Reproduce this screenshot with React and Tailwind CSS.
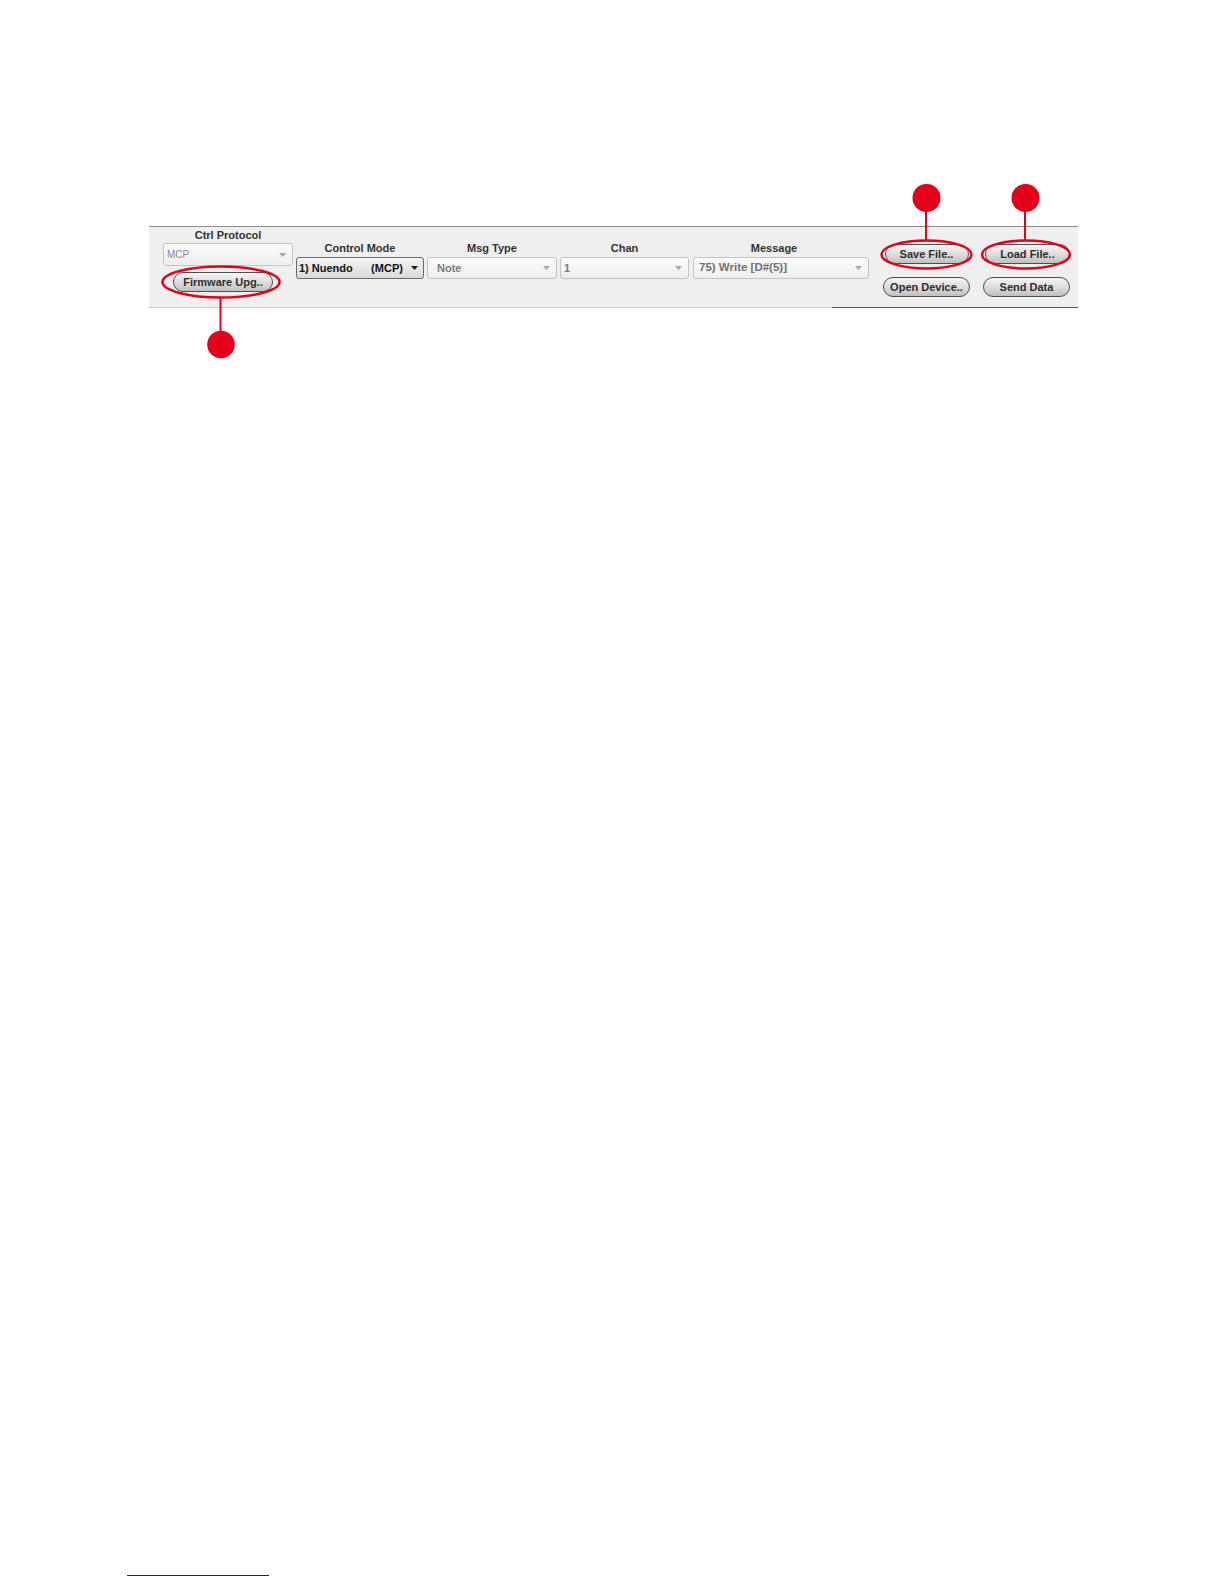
import React from 'react';

const font = { fontFamily: '"Liberation Sans", Arial, sans-serif' };

function Arrow({ dark }) {
  return (
    <svg width="7" height="4" viewBox="0 0 7 4" className="shrink-0">
      <path d="M0 0 L7 0 L3.5 4 Z" fill={dark ? '#1a1a1a' : '#a8a8a8'} />
    </svg>
  );
}

function Combo({ width, text, pad, dark, textClass }) {
  return (
    <div
      className={
        'flex items-center justify-between rounded-[3px] border ' +
        (dark
          ? 'h-[22px] border-[#6a6a6a] bg-gradient-to-b from-[#f4f4f4] to-[#dadada] pr-[5px]'
          : 'h-[22px] border-[#c4c4c4] bg-gradient-to-b from-[#fcfcfc] to-[#eeeeee] pr-[6px]')
      }
      style={{ width, paddingLeft: pad }}
    >
      <span className={'whitespace-pre ' + textClass}>{text}</span>
      <Arrow dark={dark} />
    </div>
  );
}

function Field({ label, width, gap, labelClass = '', children }) {
  return (
    <div className="flex flex-col pt-[15px]" style={{ width, marginLeft: gap }}>
      <div className={'h-[13px] text-center text-[11px] font-bold leading-[13px] text-[#333] ' + labelClass}>{label}</div>
      <div className="mt-[2px]">{children}</div>
    </div>
  );
}

function PillButton({ label, width }) {
  return (
    <button
      className="flex h-[20px] items-center justify-center rounded-full border border-[#4e4e4e] bg-gradient-to-b from-[#f4f4f4] via-[#dedede] to-[#c0c0c0] text-[11px] font-bold leading-none text-[#2e2e2e]"
      style={{ width }}
    >
      {label}
    </button>
  );
}

function Annotations() {
  const red = '#e2001a';
  return (
    <svg className="pointer-events-none absolute left-0 top-0" width="1224" height="1584">
      <ellipse cx="221" cy="282" rx="58.5" ry="15.5" fill="none" stroke={red} strokeWidth="2.5" />
      <line x1="220.5" y1="297" x2="220.5" y2="332" stroke={red} strokeWidth="2" />
      <circle cx="221" cy="344.5" r="13.8" fill={red} />

      <ellipse cx="926.5" cy="254.5" rx="45" ry="14" fill="none" stroke={red} strokeWidth="2.5" />
      <line x1="926" y1="210" x2="926" y2="241" stroke={red} strokeWidth="2" />
      <circle cx="926.5" cy="198" r="14" fill={red} />

      <ellipse cx="1026" cy="254.5" rx="44" ry="14" fill="none" stroke={red} strokeWidth="2.5" />
      <line x1="1025" y1="210" x2="1025" y2="241" stroke={red} strokeWidth="2" />
      <circle cx="1025.5" cy="198" r="14" fill={red} />
    </svg>
  );
}

export default function App() {
  return (
    <div className="relative min-h-[1584px] bg-white" style={font}>
      <div className="pl-[149px] pt-[226px]">
        <div className="flex w-[929px] flex-col bg-[#efefef]">
          <div className="h-px bg-[#8c8c8c]" />
          <div className="flex h-[80px] items-start">
            {/* Ctrl Protocol column */}
            <div className="ml-[14px] flex w-[130px] flex-col pt-[2px]">
              <div className="h-[13px] text-center text-[11px] font-bold leading-[13px] text-[#333]">Ctrl Protocol</div>
              <div className="mt-[1px]">
                <div className="flex h-[23px] w-[130px] items-center justify-between rounded-[3px] border border-[#c4c4c4] bg-gradient-to-b from-[#fcfcfc] to-[#eeeeee] pl-[3px] pr-[6px]">
                  <span className="text-[10px] text-[#8a8a8a]">MCP</span>
                  <Arrow />
                </div>
              </div>
              <div className="ml-[10px] mt-[6px]">
                <PillButton label="Firmware Upg.." width={100} />
              </div>
            </div>

            <Field label="Control Mode" width={128} gap={3}>
              <Combo
                width={128}
                dark
                pad={2}
                text={'1) Nuendo      (MCP)'}
                textClass="text-[11px] font-bold text-[#111]"
              />
            </Field>
            <Field label="Msg Type" width={130} gap={3}>
              <Combo width={130} pad={9} text="Note" textClass="text-[11px] font-bold text-[#7a7a7a]" />
            </Field>
            <Field label="Chan" width={129} gap={3}>
              <Combo width={129} pad={3} text="1" textClass="text-[11px] font-bold text-[#7a7a7a]" />
            </Field>
            <Field label="Message" width={176} gap={4} labelClass="pr-[14px]">
              <Combo width={176} pad={5} text="75) Write [D#(5)]" textClass="text-[11.5px] font-bold text-[#707070]" />
            </Field>

            {/* file / device buttons */}
            <div className="ml-[14px] grid grid-cols-[87px_87px] content-start gap-x-[13px] gap-y-[13px] pt-[17px]">
              <div className="flex justify-center">
                <PillButton label="Save File.." width={84} />
              </div>
              <div className="flex justify-end">
                <PillButton label="Load File.." width={85} />
              </div>
              <PillButton label="Open Device.." width={87} />
              <PillButton label="Send Data" width={87} />
            </div>
          </div>
          <div className="flex h-px">
            <div className="w-[683px] bg-[#c8c8c8]" />
            <div className="flex-1 bg-[#555]" />
          </div>
        </div>
      </div>

      <div className="ml-[127px] mt-[1267px] h-px w-[142px] bg-[#1c1c8a]" />

      <Annotations />
    </div>
  );
}
